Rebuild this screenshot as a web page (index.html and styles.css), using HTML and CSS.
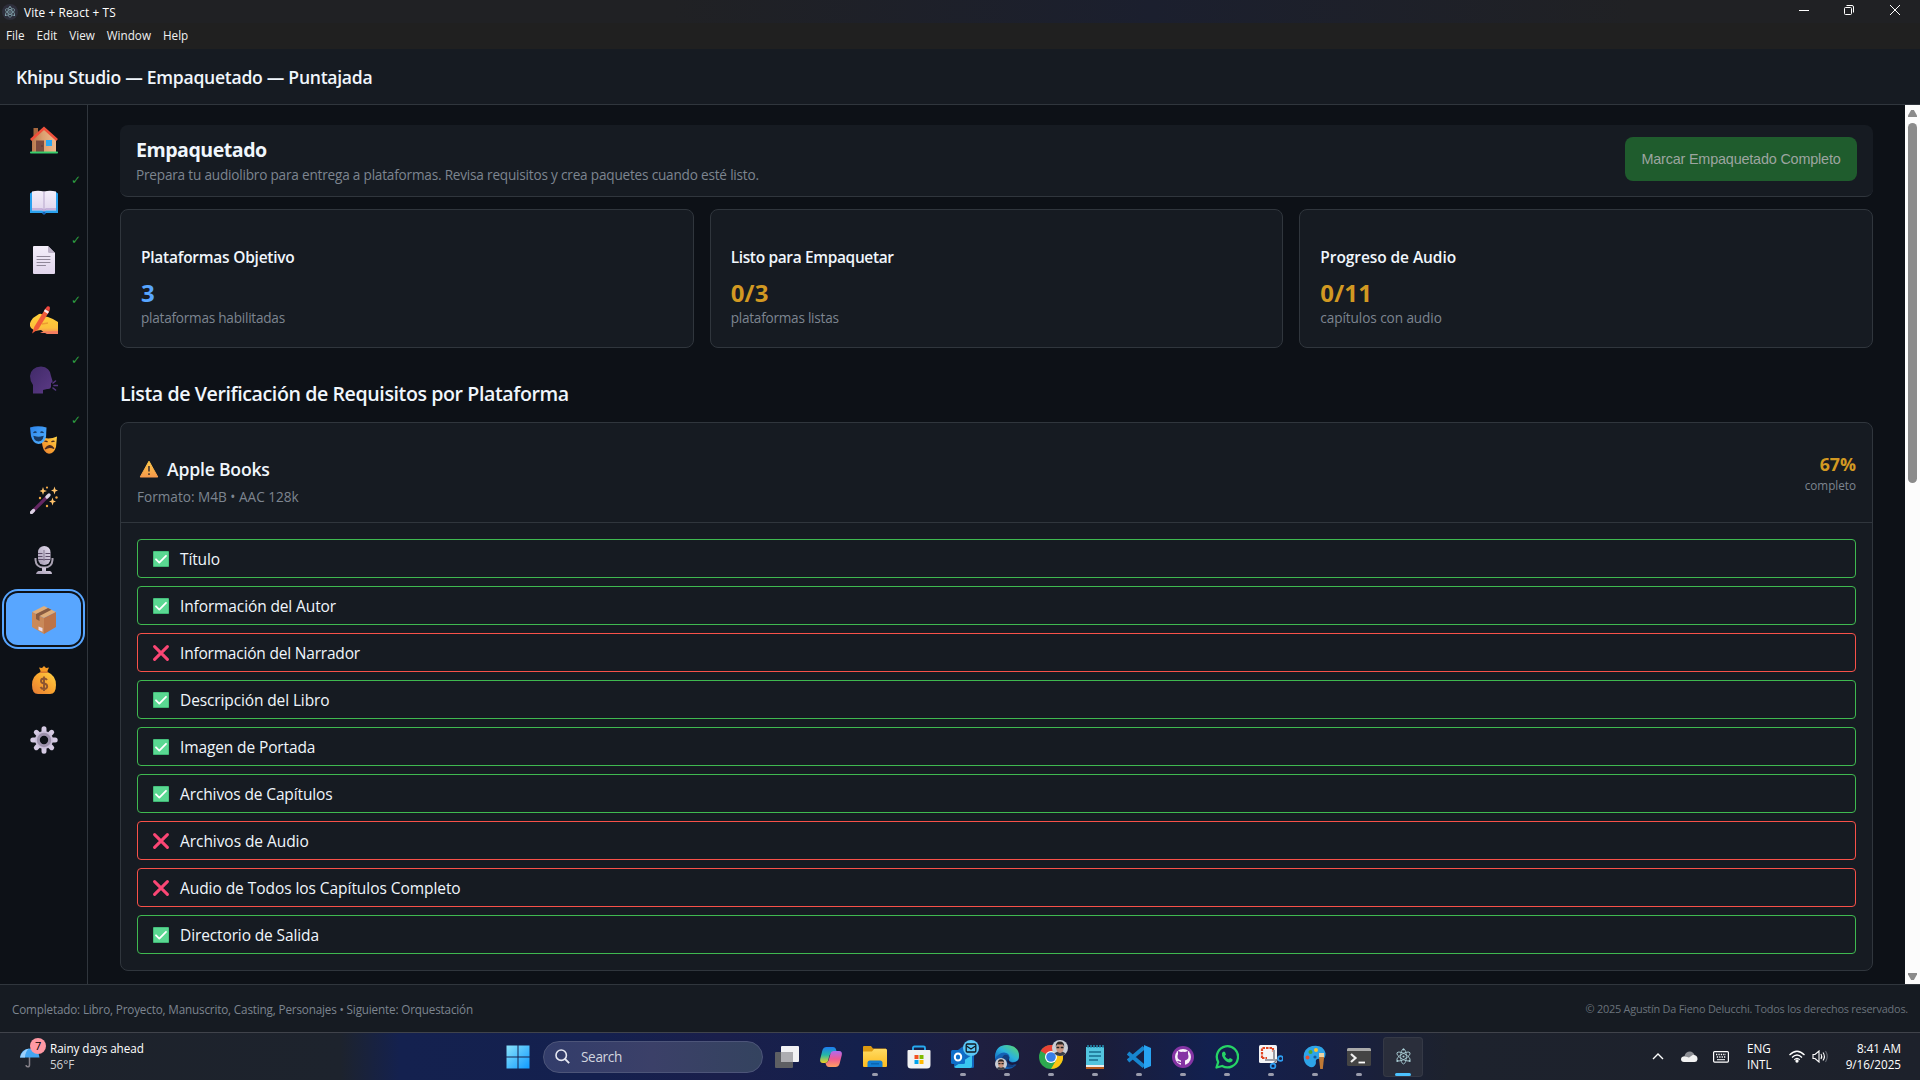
FILE: index.html
```html
<!DOCTYPE html>
<html lang="es">
<head>
<meta charset="utf-8">
<title>Vite + React + TS</title>
<link rel="stylesheet" href="styles.css">
</head>
<body>
<svg class="defs" aria-hidden="true">
  <defs>
    <linearGradient id="wood" x1="0" x2="1"><stop offset="0" stop-color="#b97a4e"/><stop offset=".45" stop-color="#dba070"/><stop offset="1" stop-color="#f0b98c"/></linearGradient>
    <linearGradient id="paper" x1="0" y1="0" x2="0" y2="1"><stop offset="0" stop-color="#f3eefa"/><stop offset="1" stop-color="#e0d5ec"/></linearGradient>
    <linearGradient id="skin" x1="0" y1="0" x2="0" y2="1"><stop offset="0" stop-color="#ffd13a"/><stop offset=".7" stop-color="#fcbf3c"/><stop offset="1" stop-color="#f0825c"/></linearGradient>
    <linearGradient id="gold" x1="1" y1="0" x2="0" y2="1"><stop offset="0" stop-color="#ffd447"/><stop offset=".5" stop-color="#faa52f"/><stop offset="1" stop-color="#e47a35"/></linearGradient>
    <linearGradient id="violet" x1="0" y1="0" x2="1" y2="1"><stop offset="0" stop-color="#402a68"/><stop offset="1" stop-color="#5c3a86"/></linearGradient>
    <linearGradient id="silver" x1="1" y1="0" x2="0" y2="1"><stop offset="0" stop-color="#e4dcee"/><stop offset="1" stop-color="#a49bb2"/></linearGradient>
    <linearGradient id="mask" x1="0" y1="0" x2="1" y2="1"><stop offset="0" stop-color="#2b83ea"/><stop offset="1" stop-color="#55b4ff"/></linearGradient>
    <linearGradient id="win" x1="0" y1="0" x2="1" y2="1"><stop offset="0" stop-color="#8ae2fb"/><stop offset="1" stop-color="#0f9bff"/></linearGradient>
    <linearGradient id="cop1" x1="0" y1="0" x2="0" y2="1"><stop offset="0" stop-color="#1d7cf2"/><stop offset=".5" stop-color="#25b7a6"/><stop offset="1" stop-color="#f3d321"/></linearGradient>
    <linearGradient id="cop2" x1="0" y1="0" x2="0" y2="1"><stop offset="0" stop-color="#b06af0"/><stop offset=".5" stop-color="#ee5b93"/><stop offset="1" stop-color="#ffa060"/></linearGradient>
    <linearGradient id="folder" x1="0" y1="0" x2="0" y2="1"><stop offset="0" stop-color="#ffdb62"/><stop offset="1" stop-color="#fdbb1e"/></linearGradient>
    <linearGradient id="edge" x1="0" y1="1" x2="1" y2="0"><stop offset="0" stop-color="#0f5fb8"/><stop offset=".5" stop-color="#2bb2de"/><stop offset="1" stop-color="#62dd60"/></linearGradient>
    <linearGradient id="warn" x1="0" y1="0" x2="0" y2="1"><stop offset="0" stop-color="#ffc94a"/><stop offset="1" stop-color="#f79a4b"/></linearGradient>
    <symbol id="ok" viewBox="0 0 16 16"><rect width="16" height="16" rx=".8" fill="#3fb774"/><rect x=".8" y=".8" width="14.6" height="14.2" rx=".6" fill="#5ad892"/><path d="M3 8.3 6.3 11.6 13 4.8" fill="none" stroke="#fff" stroke-width="1.8" stroke-linecap="round" stroke-linejoin="round"/></symbol>
    <symbol id="no" viewBox="0 0 16 16"><path d="M1.6 1.6 14.4 14.4M14.4 1.6 1.6 14.4" stroke="#fb4674" stroke-width="3" stroke-linecap="round"/></symbol>
    <symbol id="electron" viewBox="0 0 16 16"><g fill="none" stroke="currentColor" stroke-width=".8"><ellipse cx="8" cy="8" rx="7" ry="2.7" transform="rotate(30 8 8)"/><ellipse cx="8" cy="8" rx="7" ry="2.7" transform="rotate(90 8 8)"/><ellipse cx="8" cy="8" rx="7" ry="2.7" transform="rotate(150 8 8)"/></g><g fill="currentColor"><circle cx="8" cy="8" r="1"/><circle cx="8" cy="1.4" r="1"/><circle cx="2.2" cy="12.2" r="1"/><circle cx="13.8" cy="12.2" r="1"/></g></symbol>
    <symbol id="face" viewBox="0 0 16 16"><circle cx="8" cy="8" r="8" fill="#c9ced6"/><path d="M2.2 13.5Q8 9 13.8 13.5 8 18.5 2.2 13.5Z" fill="#3b3f48"/><ellipse cx="8" cy="8" rx="3.8" ry="5" fill="#c99680"/><path d="M3.8 7Q3.5 1.5 8 1.5T12.2 7L11 4.500H5Z" fill="#2b2422"/><path d="M4.500 7.500H7.300M8.700 7.500H11.500" stroke="#222" stroke-width="1.400"/></symbol>
  </defs>
</svg>
<div class="desktop">
  <div class="titlebar">
    <span class="app-badge"><svg width="12" height="12"><use href="#electron"/></svg></span>
    <span class="window-title">Vite + React + TS</span>
    <div class="window-controls">
      <svg width="10" height="10" viewBox="0 0 10 10"><path d="M0 5.500H10" stroke="#fff"/></svg>
      <svg width="10" height="10" viewBox="0 0 10 10" fill="none" stroke="#fff"><rect x=".5" y="2.500" width="7" height="7" rx="1"/><path d="M2.500.5H8Q9.500.5 9.500 2V7.500"/></svg>
      <svg width="10" height="10" viewBox="0 0 10 10"><path d="M0 0 10 10M10 0 0 10" stroke="#fff"/></svg>
    </div>
  </div>
  <nav class="menubar"><span>File</span><span>Edit</span><span>View</span><span>Window</span><span>Help</span></nav>
  <header class="app-header"><h1>Khipu Studio — Empaquetado — Puntajada</h1></header>
  <div class="workspace">
    <aside class="sidebar">
      <button class="step"><svg width="28" height="28" viewBox="0 0 28 28"><path d="M3.500 2H8V12H3.500Z" fill="#a5683f"/><path d="M2 13.500 14 3 26 13.500V26H2Z" fill="url(#wood)"/><path d="M.9 14 14 2.200 27.100 14" fill="none" stroke="#f0503b" stroke-width="2.600"/><path d="M6 14.500H14V26H6Z" fill="#7c4b3e"/><circle cx="12" cy="20" r=".7" fill="#493030"/><rect x="16" y="14" width="6" height="6" fill="#2ba8f3"/><rect y="25.400" width="28" height="2.200" rx=".8" fill="#38cd6c"/></svg></button>
      <button class="step book"><svg width="28" height="28" viewBox="0 0 28 28"><path d="M0 6.500 2 5H26L28 6.500V26H16L14 27.500 12 26H0Z" fill="#2aa1ee"/><path d="M2 4.500Q8 3 14 4.500 20 3 26 4.500V23.500H15.500L14 24.500 12.500 23.500H2Z" fill="url(#paper)"/><path d="M2 22H12L14 23.500 16 22H26" fill="none" stroke="#bda7d5" stroke-width="1.400"/><path d="M14 4.500V23" stroke="#bfb0d2" stroke-width="1.200"/><circle cx="14" cy="26" r="1.500" fill="#1762b6"/></svg><i class="done">✓</i></button>
      <button class="step"><svg width="28" height="28" viewBox="0 0 28 28"><path d="M3 1Q3 0 4 0H18L25 7V27Q25 28 24 28H4Q3 28 3 27Z" fill="url(#paper)"/><path d="M18 0 25 7H19.500Q18 7 18 5.500Z" fill="#bcb2c8"/><path d="M7 10.500H20M7 13.500H20M7 16.500H20M7 19.500H15.500" stroke="#8f8799" stroke-width="1.100" stroke-linecap="round"/></svg><i class="done">✓</i></button>
      <button class="step"><svg width="28" height="28" viewBox="0 0 28 28"><path d="M0 20Q-1 17 3 12L9 8Q12 7 13 10L18 11Q24 13 28 16V28H17Q13 26 11 24L5 25 1 22Z" fill="url(#skin)"/><path d="M10 27Q12 25 17 25.500L28 25V28H20L15 27Z" fill="#f47d60"/><path d="M2 27.500 4.500 20.500 15.500 2.500 19.500 5 8.500 23Z" fill="#f15b39"/><path d="M13.800 5.200 17.800 7.700 19 5.800 15 3.300Z" fill="#f8e7eb"/><path d="M15.500 2.700 17 .5Q19-.5 20 1.500L19.500 5Z" fill="#f0473e"/><path d="M12 18 18 17" stroke="#ed9b32" stroke-width="1.300"/></svg><i class="done">✓</i></button>
      <button class="step"><svg width="28" height="28" viewBox="0 0 28 28"><path d="M3 27.500V19Q0 15 0 10 1 1 11 .5 20 1 21 10L22.500 15Q23 16.500 21 17V21Q20.500 23.500 17 23L13 24V27.500Z" fill="url(#violet)"/><path d="M23 17 25.500 15M24 19.500H28M23 22 25.500 24" stroke="#55377f" stroke-width="1.600" stroke-linecap="round"/></svg><i class="done">✓</i></button>
      <button class="step"><svg width="28" height="28" viewBox="0 0 28 28"><path d="M11 11Q19 14 27 10.500L26 21Q24 27.500 19 27.800 14 27 12.500 20Z" fill="url(#gold)"/><path d="M14.500 15.500Q16 14.500 17.500 16M21.500 16Q23 14.500 24.500 15.500M15 23Q19.500 16.500 24 22.500 19.500 20 15 23" fill="#4b2c22" stroke="#4b2c22" stroke-width="1.200"/><path d="M0 1.500Q8-1 16.500 1.500L16 11Q14 18 8.500 18 2.500 17 1 10Z" fill="url(#mask)"/><path d="M3.500 7Q5 5 6.500 6.500M10.500 6.500Q12 5 13.500 7M4 10.500Q8.500 12 13 10.500 12 15 8.500 15 5 15 4 10.500Z" fill="#173962" stroke="#173962" stroke-width="1.100"/></svg><i class="done">✓</i></button>
      <button class="step"><svg width="28" height="28" viewBox="0 0 28 28"><path d="M2 26 18 10" stroke="#642763" stroke-width="3.200"/><path d="M1.500 26.500 3.500 24.500M17 11 19 9" stroke="#dcd3e5" stroke-width="3.200" stroke-linecap="round"/><path d="M13 1 14 4 17 5 14 6 13 9 12 6 9.500 5 12 4ZM24.500.5 25.500 3.500 28 4.500 25.500 5.500 24.500 8.500 23.500 5.500 21 4.500 23.500 3.500ZM22.500 11.500 23.500 14.500 26 15.500 23.500 16.500 22.500 19.500 21.500 16.500 19 15.500 21.500 14.500Z" fill="#ffc36c"/><g fill="#f2a846"><circle cx="17" cy="1.600" r="1.100"/><circle cx="10" cy="12" r="1.200"/><circle cx="26.500" cy="11.500" r="1.200"/><circle cx="17" cy="20" r="1.200"/></g></svg></button>
      <button class="step"><svg width="28" height="28" viewBox="0 0 28 28"><path d="M5.500 12V14Q6 21.500 14 21.500T22.500 14V12" fill="none" stroke="#aaa3b3" stroke-width="2"/><rect x="8" y="0" width="12.500" height="19" rx="6.200" fill="url(#silver)"/><path d="M8 7.500H12.500M15.500 7.500H20.500M8 10.500H12.500M15.500 10.500H20.500M8 13.500H20.500" stroke="#5b4d68" stroke-width="1.200"/><path d="M14 4V15" stroke="#857c91"/><path d="M12 21.500H16V25H20Q22 25.500 22 28H6Q6.500 25.500 8.500 25H12Z" fill="url(#silver)"/></svg></button>
      <button class="step active"><svg width="28" height="28" viewBox="0 0 28 28"><path d="M14 0 26 6 14 12 2 6Z" fill="#e0ae7a"/><path d="M2 6 14 12V28L2 21Z" fill="#c98959"/><path d="M26 6 14 12V28L26 21Z" fill="#bd7448"/><path d="M6 8 18 2 21.500 3.800 9.500 10V15L6 13Z" fill="#885a40"/><path d="M8.500 20.500 12.500 22V25.800L8.500 24Z" fill="#eddbe6"/></svg></button>
      <button class="step"><svg width="28" height="28" viewBox="0 0 28 28"><path d="M9 1.500 12 2 14 0 16 2 19 1.500 17 6H11Z" fill="#f59a25"/><path d="M10.500 6H17.500Q26 9.500 26 19 26 28 20 28H8Q2 28 2 19 2 9.500 10.500 6Z" fill="url(#gold)"/><path d="M10 6.200H18" stroke="#d9752c" stroke-width="1.500"/><path d="M17 14Q16 12.500 14 12.500 11 12.500 11 15 11 17 14 17.500 17.200 18 17.200 20.500 17 23 14 23 11.500 23 10.500 21M14 10.500V25" fill="none" stroke="#8d5530" stroke-width="1.900"/></svg></button>
      <button class="step"><svg width="28" height="28" viewBox="0 0 28 28"><g stroke="#d5cae3" stroke-width="5" stroke-linecap="round"><path d="M14 2.800V25.200M2.800 14H25.200M6.300 6.300 21.700 21.700M21.700 6.300 6.300 21.700"/></g><circle cx="14" cy="14" r="9" fill="#c9bed8"/><circle cx="14" cy="14" r="5.700" fill="#0d1117" stroke="#9d92ac" stroke-width="3"/></svg></button>
    </aside>
    <main class="content">
      <section class="page-head">
        <div><h2>Empaquetado</h2><p>Prepara tu audiolibro para entrega a plataformas. Revisa requisitos y crea paquetes cuando esté listo.</p></div>
        <button class="complete-btn">Marcar Empaquetado Completo</button>
      </section>
      <section class="stats">
        <article class="card"><h3>Plataformas Objetivo</h3><strong class="value blue">3</strong><p>plataformas habilitadas</p></article>
        <article class="card ready"><h3>Listo para Empaquetar</h3><strong class="value">0/3</strong><p>plataformas listas</p></article>
        <article class="card audio"><h3>Progreso de Audio</h3><strong class="value">0/11</strong><p>capítulos con audio</p></article>
      </section>
      <h2 class="section-title">Lista de Verificación de Requisitos por Plataforma</h2>
      <section class="platform">
        <header class="platform-head">
          <div><h3><svg width="20" height="18" viewBox="0 0 20 18"><path d="M10 1.200 18.800 17H1.200Z" fill="url(#warn)" stroke="url(#warn)" stroke-linejoin="round"/><path d="M10 6V11.500M10 13.300V15" stroke="#4f3c31" stroke-width="1.700"/></svg><span>Apple Books</span></h3><p>Formato: M4B • AAC 128k</p></div>
          <div class="score"><strong>67%</strong><small>completo</small></div>
        </header>
        <ul class="checks">
          <li><svg width="16" height="16"><use href="#ok"/></svg><span>Título</span></li>
          <li><svg width="16" height="16"><use href="#ok"/></svg><span>Información del Autor</span></li>
          <li class="fail"><svg width="16" height="16"><use href="#no"/></svg><span class="tight">Información del Narrador</span></li>
          <li><svg width="16" height="16"><use href="#ok"/></svg><span>Descripción del Libro</span></li>
          <li><svg width="16" height="16"><use href="#ok"/></svg><span>Imagen de Portada</span></li>
          <li><svg width="16" height="16"><use href="#ok"/></svg><span>Archivos de Capítulos</span></li>
          <li class="fail"><svg width="16" height="16"><use href="#no"/></svg><span class="loose">Archivos de Audio</span></li>
          <li class="fail"><svg width="16" height="16"><use href="#no"/></svg><span class="loose">Audio de Todos los Capítulos Completo</span></li>
          <li><svg width="16" height="16"><use href="#ok"/></svg><span>Directorio de Salida</span></li>
        </ul>
      </section>
    </main>
    <div class="scrollbar"><i class="up"></i><i class="thumb"></i><i class="down"></i></div>
  </div>
  <footer class="status"><span>Completado: Libro, Proyecto, Manuscrito, Casting, Personajes • Siguiente: Orquestación</span><small>© 2025 Agustín Da Fieno Delucchi. Todos los derechos reservados.</small></footer>
  <div class="taskbar">
    <div class="weather"><span class="umbrella"><svg width="20" height="20" viewBox="0 0 20 20"><path d="M9.500 8V17Q9.500 18.800 7.800 18.800T6 17" fill="none" stroke="#858088" stroke-width="1.500"/><path d="M0 9.500Q1 1 10 .5 18.500 1 19.500 9.500Z" fill="#43a6f2"/><path d="M0 9.500Q2 2 9 .6 5 4 5 9.500Z" fill="#9bd0fb"/></svg><b>7</b></span><div><span>Rainy days ahead</span><em>56°F</em></div></div>
    <div class="dock">
      <svg class="start" width="24" height="24" viewBox="0 0 24 24"><path d="M.5.5H11.500V11.500H.5ZM12.500.5H23.500V11.500H12.500ZM.5 12.500H11.500V23.500H.5ZM12.500 12.500H23.500V23.500H12.500Z" fill="url(#win)"/></svg>
      <div class="search"><svg width="15" height="15" viewBox="0 0 15 15"><circle cx="6.200" cy="6.200" r="5.200" fill="none" stroke="#e6e8f2" stroke-width="1.600"/><path d="M10 10 14.200 14.200" stroke="#e6e8f2" stroke-width="1.800"/></svg><span>Search</span></div>
      <div class="app"><svg width="24" height="24" viewBox="0 0 24 24"><rect x="6" y="1" width="18" height="16" rx="1" fill="#f2f2f4"/><rect y="7" width="18" height="16" rx="1" fill="#5e5f63"/><path d="M6 7H18V17H6Z" fill="#adadb1"/></svg></div>
      <div class="app"><svg width="24" height="24" viewBox="0 0 24 24"><path d="M7.500 2H14Q16.500 2 17.200 5L18 8H13Q11 8 10 12L9 16Q8.500 18 6 18H4Q.5 18 1.200 14L3.500 5Q4.500 2 7.500 2Z" fill="url(#cop1)"/><path d="M16.500 22H10Q7.500 22 6.800 19L6.500 18Q9 18 10 14L11.500 8.500Q12 6 14.500 6H20Q23.500 6 22.800 10L20.500 19Q19.500 22 16.500 22Z" fill="url(#cop2)"/></svg></div>
      <div class="app open"><svg width="24" height="24" viewBox="0 0 24 24"><path d="M0 2Q0 1 1 1H8L10 3.500H23V8H0Z" fill="#dd9a10"/><path d="M0 6.500H9L11 4H23Q24 4 24 5V21Q24 22 23 22H1Q0 22 0 21Z" fill="url(#folder)"/><path d="M4.500 22V18Q4.500 15.500 7 15.500H17Q19.500 15.500 19.500 18V22Z" fill="#127ed2"/><path d="M8 18.800H16" stroke="#0a5fa7" stroke-width="1.200"/></svg></div>
      <div class="app"><svg width="24" height="24" viewBox="0 0 24 24"><path d="M6 6V3Q6 1.500 7.500 1.500H16.500Q18 1.500 18 3V6" fill="none" stroke="#27a9ef" stroke-width="1.900"/><path d="M.5 6Q.5 5 1.500 5H22.500Q23.500 5 23.500 6V20Q23.500 23.500 20 23.500H4Q.5 23.500.5 20Z" fill="#f1f2f4"/><path d="M7.500 10H11.500V14H7.500Z" fill="#f25022"/><path d="M12.500 10H16.500V14H12.500Z" fill="#7fba00"/><path d="M7.500 15H11.500V19H7.500Z" fill="#00a4ef"/><path d="M12.500 15H16.500V19H12.500Z" fill="#ffb900"/></svg></div>
      <div class="app open outlook"><svg width="24" height="24" viewBox="0 0 24 24"><path d="M4 7 14 0 23 7V22Q23 23 21 23H5Q3 23 3 21Z" fill="#1267bd"/><path d="M3 22 21 10V21Q21 23 19 23H5Z" fill="#39c6f1"/><rect y="5" width="14" height="14" rx="1.500" fill="#0f6fc9"/><ellipse cx="7" cy="12" rx="3.200" ry="3.600" fill="none" stroke="#fff" stroke-width="2"/></svg><svg class="badge" width="16" height="16" viewBox="0 0 16 16"><circle cx="8" cy="8" r="8" fill="#5bc8f7"/><rect x="3.200" y="4" width="9.600" height="8" rx="1" fill="none" stroke="#101a22" stroke-width="1.300"/><path d="M3.500 6 8 9 12.500 6" fill="none" stroke="#101a22" stroke-width="1.200"/></svg></div>
      <div class="app open edge"><svg width="24" height="24" viewBox="0 0 24 24"><circle cx="12" cy="12" r="12" fill="#1462b5"/><path d="M0 11Q1 0 12 0 24 1 24 11 24 17 17 17 13 16.500 14.500 13.500 15 8 9 7.500 3 8 0 14Z" fill="url(#edge)"/><path d="M9 10Q4 15 9 20 14 25 21 20 16 21 13 17.500 10.500 14 14.500 13 13 8.500 9 10Z" fill="#123f80"/><path d="M14 13Q12.500 16.500 17 17.500 20.500 18 24 14.500V20L20 19.500Q14 21 12 16.500 12 13.500 14 13Z" fill="#171c43"/></svg><svg class="badge" width="12" height="12"><use href="#face"/></svg></div>
      <div class="app open chrome"><svg width="24" height="24" viewBox="0 0 24 24"><circle cx="12" cy="12" r="12" fill="#2da94f"/><path d="M12 12 1.600 6A12 12 0 0 1 22.400 6Z" fill="#e94234"/><path d="M12 6H22.400A12 12 0 0 1 12 24L17.200 15Z" fill="#fdc413"/><circle cx="12" cy="12" r="6" fill="#fff"/><circle cx="12" cy="12" r="4.800" fill="#397ee8"/></svg><svg class="badge" width="16" height="16"><use href="#face"/></svg></div>
      <div class="app open"><svg width="24" height="24" viewBox="0 0 24 24"><path d="M3 2H21V21H3Z" fill="#53c5df"/><path d="M3 20H21V22H3Z" fill="#eee"/><path d="M3 22H21V24H3Z" fill="#b75c1e"/><path d="M5 0V3M8 0V3M11 0V3M14 0V3M17 0V3M20 0V3" stroke="#2496b8" stroke-width="1.400"/><path d="M6 7H18M6 11H18M6 15H15" stroke="#176c8e" stroke-width="1.500"/></svg></div>
      <div class="app open"><svg width="24" height="24" viewBox="0 0 24 24"><path d="M1 8 17 21.500M1 16 17 2.500" stroke="#1786cf" stroke-width="4"/><path d="M17 0 24 3V21L17 24Z" fill="#27a3f2"/></svg></div>
      <div class="app open"><svg width="24" height="24" viewBox="0 0 24 24"><circle cx="12" cy="12" r="11" fill="#8534a4"/><circle cx="12" cy="12" r="8" fill="#f7f2f9"/><path d="M7 6 10 7Q12 6.500 14 7L17 6V9Q19 14 14 15.500V20H10V18Q7 18.500 6 16 8 16 10 17V15.500Q5 14 7 9Z" fill="#8534a4"/></svg></div>
      <div class="app open"><svg width="24" height="24" viewBox="0 0 24 24"><path d="M1.500 22.500 3.200 17A10.600 10.600 0 1 1 7.200 21Z" fill="none" stroke="#26d366" stroke-width="2.300" stroke-linejoin="round"/><path d="M7 8Q8.500 5.500 10 7L11 9.500 9.800 11Q11 13.500 13.500 14.300L15 13 17.500 14.200Q18 16.500 15.500 17.300 12 18 8.500 13.500 6.500 10.500 7 8Z" fill="#26d366"/></svg></div>
      <div class="app open"><svg width="24" height="24" viewBox="0 0 24 24"><rect width="18" height="18" rx="1.500" fill="#f4f4f6"/><path d="M3 13V3H14M3 13H8M14 3V7" fill="none" stroke="#e14320" stroke-width="2.200" stroke-dasharray="2.500 1"/><path d="M15 5V15M6 15H18" stroke="#9d9da5" stroke-width="2"/><path d="M14 19 19 14" stroke="#777e89" stroke-width="1.500"/><circle cx="21.500" cy="13.500" r="2.400" fill="none" stroke="#2d9df1" stroke-width="1.700"/><circle cx="14" cy="21" r="2.400" fill="none" stroke="#2d9df1" stroke-width="1.700"/></svg></div>
      <div class="app open"><svg width="24" height="24" viewBox="0 0 24 24"><path d="M1 15Q-1 4 9 1 20-1 22.500 8 23 15 17 14 12 13 13 18 12 23 7 22 2 20 1 15Z" fill="#2ea4e8"/><circle cx="4.500" cy="12.500" r="2" fill="#e75032"/><circle cx="7.500" cy="7" r="2" fill="#49a834"/><circle cx="13" cy="5" r="2" fill="#ffc429"/><circle cx="12" cy="12" r="1.600" fill="#135b9d"/><path d="M16 8H21V13L19.800 24H17.200L16 13Z" fill="#c07935"/><path d="M16 8H21V12H16Z" fill="#ead5a8"/></svg></div>
      <div class="app open"><svg width="24" height="24" viewBox="0 0 24 24"><rect y="3" width="24" height="18" rx="1.500" fill="#444"/><path d="M0 6V4.500Q0 3 1.500 3H22.500Q24 3 24 4.500V6Z" fill="#aaa"/><path d="M4 9 8.500 13 4 17" fill="none" stroke="#eee" stroke-width="2.200"/><path d="M11.500 17.500H18" stroke="#fff" stroke-width="1.800"/></svg></div>
      <div class="app open current"><svg width="17" height="17"><use href="#electron"/></svg></div>
    </div>
    <div class="tray">
      <svg width="12" height="7" viewBox="0 0 12 7"><path d="M1 6 6 1 11 6" fill="none" stroke="#fff" stroke-width="1.400"/></svg>
      <svg width="17" height="11" viewBox="0 0 17 11"><path d="M3.500 5Q4.500.5 9 .5 12 .5 13.500 4L8 7Z" fill="#8c8e94"/><path d="M3 11Q0 11 0 8 .5 5 4 5.200L8 6.500 12 3.800Q17 4.500 16.500 8.500 16 11 13.500 11Z" fill="#f2f2f2"/></svg>
      <svg width="16" height="12" viewBox="0 0 16 12"><rect x=".6" y=".6" width="14.800" height="10.500" rx="1" fill="none" stroke="#fff" stroke-width="1.200"/><path d="M3 3.500H13M3.800 6H13" stroke="#fff" stroke-width="1.300" stroke-dasharray="1.300 1.100"/><path d="M4 8.700H12" stroke="#fff"/></svg>
      <div class="lang"><span>ENG</span><span>INTL</span></div>
      <svg width="16" height="13" viewBox="0 0 16 13" fill="none" stroke="#fff" stroke-width="1.300"><path d="M.5 5Q8-2.500 15.500 5M3 7.500Q8 2.500 13 7.500M5.300 9.700Q8 7 10.700 9.700"/><circle cx="8" cy="11" r="1" fill="#fff"/></svg>
      <svg class="volume" width="17" height="13" viewBox="0 0 17 13" fill="none" stroke="#fff" stroke-width="1.100"><path d="M1 4.500H3L7 1V12L3 8.500H1Z"/><path d="M9 4Q10.500 6.500 9 9M11 2.500Q13.800 6.500 11 10.500"/><path d="M13.500 1Q17 6.500 13.500 12" stroke="#666a73"/></svg>
      <div class="clock"><span>8:41 AM</span><span>9/16/2025</span></div>
    </div>
  </div>
</div>
</body>
</html>
```
FILE: styles.css
```css
* { box-sizing: border-box; }
body { margin: 0; background: #0d1117; color: #f0f6fc; font-family: "Open Sans", "Noto Sans", sans-serif; overflow: hidden; }
h1, h2, h3, p, ul { margin: 0; padding: 0; }
svg { display: block; flex: none; }
span, small, strong { white-space: nowrap; }
.defs { position: absolute; width: 0; height: 0; }
.desktop { width: 1920px; height: 1080px; display: flex; flex-direction: column; }

.titlebar { height: 23px; flex: none; display: flex; align-items: center; padding: 0 20px 0 2px; background: linear-gradient(90deg, #202124 0, #202124 35%, #1b1f2e 60%, #202124 85%); }
.app-badge { width: 16px; height: 16px; border-radius: 50%; background: #2d2e3b; color: #8fb4bd; display: grid; place-items: center; }
.window-title { margin-left: 6px; font-size: 11.8px; line-height: 22px; letter-spacing: .11px; color: #fff; }
.window-controls { margin-left: auto; display: flex; gap: 36px 35px; padding-bottom: 3px; }
.window-controls svg:last-child { margin-left: 1px; }
.menubar { height: 26px; flex: none; display: flex; gap: 12px; padding-left: 6px; background: #202020; font-size: 11.7px; line-height: 25px; color: #f0f0f0; }

.app-header { height: 56px; flex: none; padding: 1px 0 0 16px; background: #161b22; border-bottom: 1px solid #30363d; }
.app-header h1 { font-size: 17.6px; font-weight: 600; line-height: 55px; letter-spacing: -.29px; white-space: nowrap; }

.workspace { height: 879px; flex: none; display: flex; }
.sidebar { width: 88px; flex: none; display: flex; flex-direction: column; gap: 8px; padding: 8px 6px 0; border-right: 1px solid #30363d; }
.step { position: relative; width: 75px; height: 52px; flex: none; display: grid; place-items: center; padding: 2px 0 0; border: 0; border-radius: 12px; background: none; }
.step.book { padding-top: 4px; }
.step.active { background: #58a6ff; box-shadow: 0 0 0 2px #0d1117, 0 0 0 4px #58a6ff; }
.done { position: absolute; right: 0; top: 0; font: bold 12px/14px "DejaVu Sans", sans-serif; color: #2ea043; }

.content { flex: 1; min-width: 0; padding: 20px 32px 0; }
.page-head { height: 72px; display: flex; justify-content: space-between; align-items: flex-start; padding: 12px 16px 0 16px; background: #161b22; border-bottom: 1px solid #30363d; border-radius: 8px; }
.page-head h2 { padding-top: 1px; font-size: 19.6px; font-weight: 700; line-height: 24px; letter-spacing: -.5px; }
.page-head p { margin-top: 3px; letter-spacing: -.2px; }
p { font-size: 13.6px; line-height: 20px; color: #7d8590; white-space: nowrap; }
.complete-btn { width: 232px; height: 44px; padding: 0; border: 0; border-radius: 8px; background: #1f5c2d; color: #9da5a0; font: 14.400px "Liberation Sans", sans-serif; letter-spacing: -.18px; }
.stats { display: grid; grid-template-columns: repeat(3, 1fr); gap: 16px; margin-top: 12px; }
.card { height: 139px; padding: 35px 20px 0; border: 1px solid #30363d; border-radius: 8px; background: #161b22; display: flex; flex-direction: column; align-items: flex-start; letter-spacing: -.24px; }
.card h3 { font-size: 15.500px; font-weight: 600; line-height: 24px; white-space: nowrap; }
.card.ready h3 { letter-spacing: -.36px; }
.card.audio { letter-spacing: -.08px; }
.value { margin: 8px 0 -1px; font-size: 24px; line-height: 32px; letter-spacing: .2px; color: #d29922; }
.value.blue { color: #58a6ff; }
.section-title { margin: 32px 0 14px; font-size: 19.600px; font-weight: 600; line-height: 28px; letter-spacing: -.41px; }
.platform { height: 549px; border: 1px solid #30363d; border-radius: 8px; background: #161b22; }
.platform-head { height: 100px; display: flex; justify-content: space-between; padding: 33px 16px 0; border-bottom: 1px solid #30363d; }
.platform-head h3 { display: flex; align-items: center; gap: 8px; margin-left: 2px; font-size: 17.600px; font-weight: 600; line-height: 26px; letter-spacing: -.2px; }
.platform-head p { margin-top: 5px; }
.score { display: flex; flex-direction: column; align-items: flex-end; margin-top: -4px; }
.score strong { font-size: 17.800px; line-height: 24px; color: #d29922; }
.score small { margin-top: 1px; font-size: 11.700px; line-height: 16px; color: #7d8590; }
.checks { list-style: none; display: flex; flex-direction: column; gap: 8px; padding: 16px 16px 0; }
.checks li { height: 39px; display: flex; align-items: center; gap: 11px; padding-left: 15px; border: 1px solid #3fb950; border-radius: 4px; font-size: 15.500px; line-height: 24px; letter-spacing: -.12px; }
.checks li.fail { border-color: #f85149; }
.checks .tight { letter-spacing: -.2px; }
.checks .loose { letter-spacing: -.06px; }

.scrollbar { width: 15px; flex: none; display: flex; flex-direction: column; align-items: center; background: #fcfcfc; }
.up, .down { width: 9px; height: 7px; background: #8b8b8b; clip-path: polygon(35% 0, 65% 0, 100% 80%, 100% 100%, 0 100%, 0 80%); }
.up { margin-top: 5px; }
.down { margin: auto 0 4px; transform: rotate(180deg); }
.thumb { width: 9px; height: 360px; margin-top: 6px; border-radius: 5px; background: #8b8b8b; }

.status { height: 48px; flex: none; display: flex; justify-content: space-between; align-items: center; padding: 0 12px; background: #161b22; border-top: 1px solid #30363d; color: #7d8590; font-size: 11.700px; letter-spacing: -.162px; }
.status small { font-size: 10.900px; letter-spacing: -.223px; color: #6b737c; }

.taskbar { height: 48px; flex: none; display: flex; border-top: 1px solid #40434b; background: linear-gradient(90deg, #1d222b 0, #1d232d 340px, #14214f 400px, #14204e 600px, #1a1f4b 720px, #14204c 860px, #1e1f40 980px, #1b1d38 1090px, #12204f 1210px, #181f42 1330px, #1d222d 1450px, #1d212b 100%); font-size: 11.700px; color: #fff; }
.weather { width: 506px; flex: none; display: flex; gap: 4px; padding: 5px 0 0 20px; line-height: 16px; letter-spacing: -.06px; }
.weather div { display: flex; flex-direction: column; align-items: flex-start; margin-top: 2px; }
.weather em { font-style: normal; color: #d0d2d5; }
.umbrella { position: relative; width: 26px; padding-top: 10px; }
.umbrella b { position: absolute; right: 0; top: 0; width: 16px; height: 16px; border-radius: 50%; background: #ff99a4; color: #000; font: 11px/16px "Open Sans", sans-serif; text-align: center; }
.dock { display: flex; align-items: center; }
.start { margin-right: 13px; }
.search { width: 220px; height: 32px; display: flex; align-items: center; gap: 11px; padding-left: 11px; margin-right: 2px; border: 1px solid #4d5579; border-radius: 16px; background: linear-gradient(90deg, #333d6b, #3b4068 50%, #34435f); font-size: 13.600px; letter-spacing: -.34px; color: #d2d5df; }
.search span { padding-bottom: 1px; }
.app { position: relative; width: 40px; height: 40px; margin: 0 2px; display: grid; place-items: center; }
.app.open::after { content: ""; position: absolute; left: 17px; bottom: 1px; width: 6px; height: 3px; border-radius: 2px; background: #9a9cac; }
.app.current { border-radius: 4px; background: #2a2e3b; box-shadow: inset 0 0 0 1px #353946; color: #a9ccd4; }
.app.open.current::after { left: 12px; width: 16px; background: #4cc2ff; }
.badge { position: absolute; }
.outlook .badge { left: 20px; top: 3px; }
.edge .badge { left: 8px; bottom: 7px; }
.chrome .badge { left: 21px; top: 3px; }
.tray { margin-left: auto; display: flex; align-items: center; padding-right: 19px; line-height: 16px; }
.tray svg:nth-child(2) { margin-left: 17px; }
.tray svg:nth-child(3) { margin-left: 15px; }
.lang { width: 25px; margin: 0 17px 0 18px; padding-bottom: 1px; display: flex; flex-direction: column; }
.volume { margin-left: 7px; }
.clock { width: 56px; margin-left: 16px; padding-bottom: 2px; display: flex; flex-direction: column; align-items: flex-end; }
```
